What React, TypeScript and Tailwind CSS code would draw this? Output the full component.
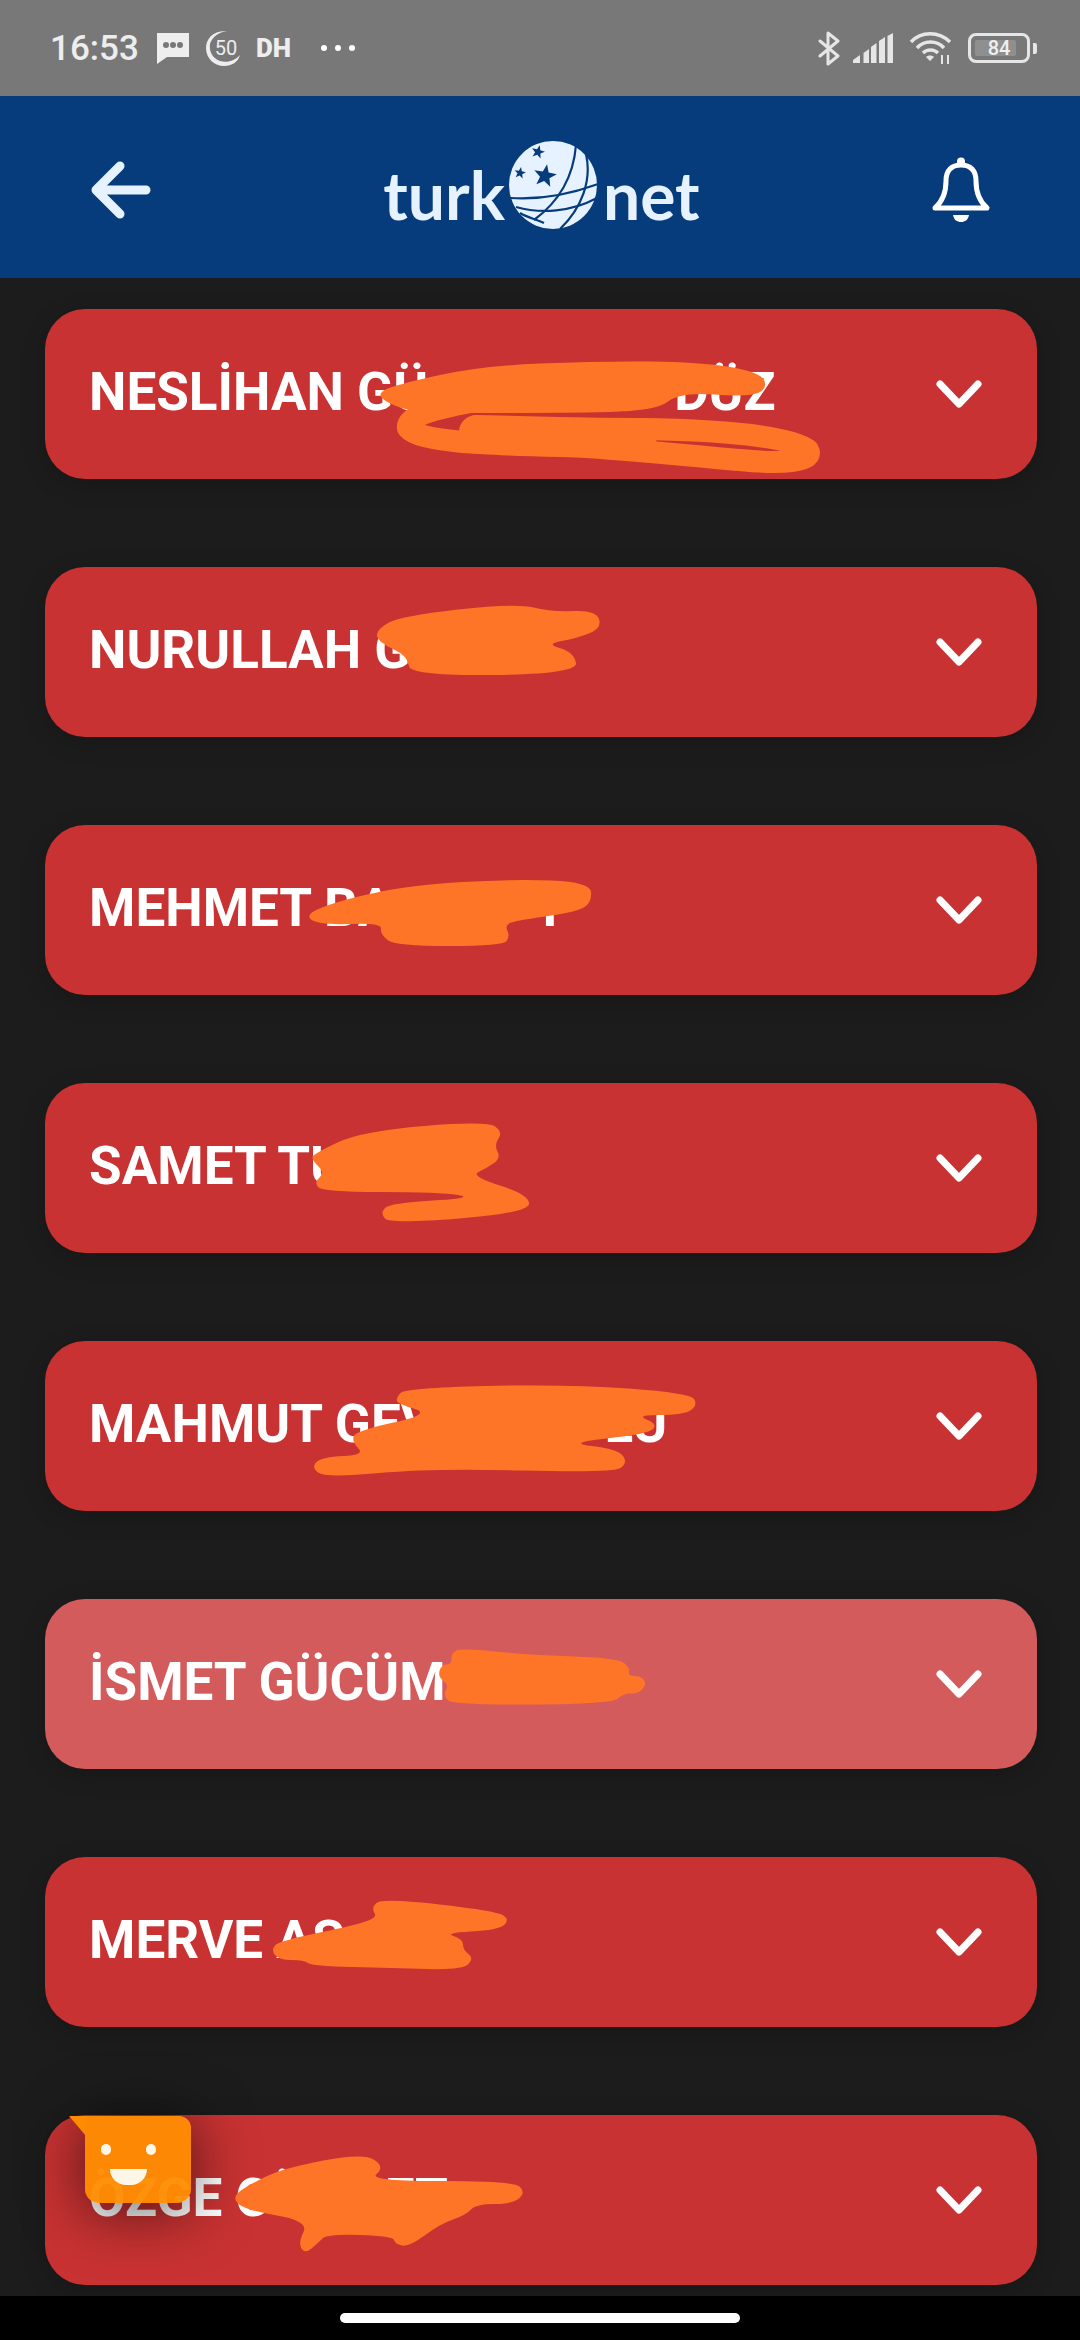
type Pt = [number, number]

// rounds a list of points into a closed blob
function blob(pts: Pt[]) {
  const mid = (a: Pt, b: Pt): Pt => [(a[0] + b[0]) / 2, (a[1] + b[1]) / 2]
  const start = mid(pts[pts.length - 1], pts[0])
  let d = `M${start[0]} ${start[1]}`
  pts.forEach((p, i) => {
    const m = mid(p, pts[(i + 1) % pts.length])
    d += ` Q${p[0]} ${p[1]} ${m[0]} ${m[1]}`
  })
  return d + ' Z'
}

function starPoints(cx: number, cy: number, r: number, rot: number) {
  const out: string[] = []
  for (let i = 0; i < 10; i++) {
    const rad = i % 2 === 0 ? r : r * 0.42
    const a = ((rot + i * 36 - 90) * Math.PI) / 180
    out.push(`${cx + rad * Math.cos(a)},${cy + rad * Math.sin(a)}`)
  }
  return out.join(' ')
}

const cards = [
  {
    name: 'NESLİHAN GÜ',
    tail: 'DÜZ',
    tailClass: 'ml-[246px]',
    top: 309,
    blobs: [
      blob([[378, 393], [395, 385], [480, 366], [600, 361], [700, 362], [760, 372], [768, 388], [750, 397], [680, 392], [656, 411], [560, 413], [415, 413], [385, 402]]),
    ],
    strokes: [
      'M474 428 L640 429 C720 430 790 436 808 450 C815 462 780 464 740 460 C680 455 610 447 560 446 C480 444 420 442 408 428 C406 415 440 408 470 402',
      'M476 432 L640 436',
    ],
  },
  {
    name: 'NURULLAH G',
    top: 567,
    blobs: [
      blob([[376, 630], [400, 616], [516, 603], [551, 612], [596, 610], [602, 628], [578, 638], [545, 644], [574, 652], [578, 674], [410, 676], [408, 656], [378, 642]]),
    ],
    strokes: [],
  },
  {
    name: 'MEHMET BA',
    tail: 'T',
    tailClass: 'ml-[140px]',
    top: 825,
    blobs: [
      blob([[304, 914], [345, 899], [413, 885], [513, 879], [590, 882], [592, 902], [577, 912], [513, 921], [505, 926], [510, 936], [503, 946], [395, 946], [380, 934], [382, 923], [318, 925]]),
    ],
    strokes: [],
  },
  {
    name: 'SAMET TU',
    top: 1083,
    blobs: [
      blob([[313, 1154], [362, 1131], [487, 1121], [503, 1132], [494, 1145], [501, 1158], [487, 1168], [470, 1176], [530, 1195], [528, 1213], [390, 1224], [380, 1213], [390, 1203], [476, 1198], [440, 1192], [322, 1192], [314, 1182], [325, 1173], [312, 1160]]),
    ],
    strokes: [],
  },
  {
    name: 'MAHMUT GEV',
    tail: 'LU',
    tailClass: 'ml-[169px]',
    top: 1341,
    blobs: [
      blob([[396, 1398], [405, 1388], [567, 1384], [690, 1393], [698, 1405], [684, 1415], [635, 1415], [658, 1424], [648, 1434], [565, 1443], [618, 1449], [628, 1463], [613, 1473], [433, 1468], [325, 1478], [311, 1467], [322, 1457], [365, 1455], [352, 1442], [355, 1431], [432, 1414], [398, 1404]]),
    ],
    strokes: [],
  },
  {
    name: 'İSMET GÜCÜM',
    top: 1599,
    pressed: true,
    blobs: [
      blob([[451, 1654], [460, 1648], [530, 1655], [618, 1658], [630, 1668], [628, 1676], [641, 1676], [647, 1684], [638, 1694], [624, 1693], [612, 1704], [452, 1705], [443, 1695], [449, 1685], [438, 1677], [441, 1665], [452, 1664]]),
    ],
    strokes: [],
  },
  {
    name: 'MERVE AS',
    top: 1857,
    blobs: [
      blob([[371, 1908], [382, 1898], [497, 1911], [510, 1920], [498, 1930], [444, 1933], [463, 1939], [463, 1950], [474, 1958], [463, 1970], [393, 1968], [312, 1966], [304, 1960], [279, 1960], [271, 1950], [279, 1941], [347, 1927], [378, 1918]]),
    ],
    strokes: [],
  },
  {
    name: 'ÖZGE CÖ',
    tail: 'ET',
    tailClass: 'ml-[78px]',
    top: 2115,
    blobs: [
      blob([[232, 2198], [245, 2187], [283, 2168], [364, 2153], [385, 2167], [368, 2181], [513, 2181], [526, 2192], [513, 2204], [476, 2204], [466, 2215], [440, 2224], [409, 2247], [395, 2244], [393, 2236], [327, 2234], [318, 2243], [305, 2254], [298, 2243], [309, 2221], [245, 2210]]),
    ],
    strokes: [],
  },
]

function Chevron() {
  return (
    <svg width="52" height="34" viewBox="0 0 52 34" fill="none" className="shrink-0">
      <path d="M8 7 L27 27 L46 7" stroke="white" strokeWidth="7" strokeLinecap="round" strokeLinejoin="round" />
    </svg>
  )
}

function StatusBar() {
  return (
    <div className="h-24 bg-[#787878] flex items-center justify-between pl-[50px] pr-[43px] text-[#ededed] shrink-0">
      <div className="flex items-center">
        <span className="text-[35px] font-medium leading-none font-['Roboto',sans-serif] w-[88px]">16:53</span>
        {/* chat */}
        <svg width="34" height="34" viewBox="0 0 34 34" className="ml-[18px]">
          <path d="M1 2 H33 V26 H11 L1 33 Z" fill="#eeeeee" />
          <circle cx="10" cy="14" r="3" fill="#787878" />
          <circle cx="17" cy="14" r="3" fill="#787878" />
          <circle cx="24" cy="14" r="3" fill="#787878" />
        </svg>
        {/* 50 hilal */}
        <div className="relative w-[36px] h-[36px] ml-[15px] flex items-center justify-center">
          <svg width="36" height="36" viewBox="0 0 36 36" className="absolute inset-0">
            <path d="M22 1 C8 0 1 9 1 18 C1 29 10 36 19 36 C27 36 33 32 35 25 C30 31 22 33 15 31 C7 28 4 21 5 14 C7 7 14 2 22 1 Z" fill="#eeeeee" />
          </svg>
          <span className="text-[20px] leading-none ml-[6px] font-['Roboto',sans-serif]">50</span>
        </div>
        <span className="text-[26px] font-black leading-none ml-[15px] font-['Roboto',sans-serif]">DH</span>
        <div className="flex gap-[8px] ml-[30px]">
          <span className="w-[6px] h-[6px] rounded-full bg-white" />
          <span className="w-[6px] h-[6px] rounded-full bg-white" />
          <span className="w-[6px] h-[6px] rounded-full bg-white" />
        </div>
      </div>
      <div className="flex items-center">
        <svg width="22" height="35" viewBox="0 0 22 35" fill="none" stroke="#e6e6e6" strokeWidth="3" strokeLinejoin="round" strokeLinecap="round">
          <path d="M2 10 L20 25 L10 33 V2 L20 10 L2 25" />
        </svg>
        <svg width="41" height="30" viewBox="0 0 41 30" fill="#e6e6e6" className="ml-[13px]">
          <polygon points="0,30 0,27 7,22 7,30" />
          <polygon points="10.5,30 10.5,20 16,16 16,30" />
          <polygon points="18,30 18,14 23.5,10 23.5,30" />
          <polygon points="26,30 26,8 32,4 32,30" />
          <polygon points="34.5,30 34.5,3 40,0 40,30" />
        </svg>
        <svg width="43" height="34" viewBox="0 0 43 34" fill="none" stroke="#e6e6e6" strokeWidth="3.5" className="ml-[15px]">
          <path d="M2 11 C12 0 30 0 41 11" />
          <path d="M8 17 C15 9 28 9 35 17" />
          <path d="M14 22 C18 18 25 18 29 22" />
          <path d="M17 26 L21 30 L25 26 C23 24 19 24 17 26 Z" fill="#e6e6e6" stroke="none" />
          <path d="M33 33 V24 M39 33 V24" strokeWidth="2" />
        </svg>
        <div className="flex items-center ml-[16px]">
          <div className="relative w-[62px] h-[30px] rounded-[8px] border-[3px] border-[#e6e6e6] flex items-center justify-center">
            <div className="absolute left-[4px] top-[4px] bottom-[4px] w-[41px] rounded-[2px] bg-[#8f8f8f]" />
            <span className="relative text-[20px] font-medium leading-none font-['Roboto',sans-serif] text-[#f0f0f0]">84</span>
          </div>
          <div className="w-[4px] h-[11px] rounded-r-[2px] bg-[#e6e6e6] ml-[3px]" />
        </div>
      </div>
    </div>
  )
}

function Logo() {
  return (
    <div className="flex items-center h-[90px]">
      <span className="text-[66px] font-bold leading-none text-[#e6f2ff] font-['Lato',sans-serif] mt-[16px]">turk</span>
      <svg width="88" height="88" viewBox="133 11 88 88" className="ml-[4px] -mt-[4px]">
        <circle cx="177" cy="55" r="44" fill="#e6f2ff" />
        <g fill="none" stroke="#063c7c" strokeWidth="2.2">
          <path d="M200 15 C198 40 188 68 158 90" />
          <path d="M210 24 C216 50 206 78 184 99" />
          <path d="M222 54 C195 64 165 70 134 68" />
          <path d="M221 68 C195 82 165 84 140 77" />
          <path d="M144 83 C152 88 160 89 168 93" />
        </g>
        <polygon points={starPoints(169, 46, 12, 10)} fill="#063c7c" />
        <polygon points={starPoints(162, 22, 7, 15)} fill="#063c7c" />
        <polygon points={starPoints(144, 43, 6, 10)} fill="#063c7c" />
      </svg>
      <span className="text-[66px] font-bold leading-none text-[#e6f2ff] font-['Lato',sans-serif] mt-[16px] ml-[6px]">net</span>
    </div>
  )
}

function Header() {
  return (
    <div className="h-[182px] bg-[#063c7c] flex items-center justify-between pl-[90px] pr-[89px] shrink-0">
      <svg width="62" height="58" viewBox="0 0 62 58" fill="none" stroke="#e6f2ff" strokeWidth="9" strokeLinecap="round" strokeLinejoin="round" className="mt-[6px]">
        <path d="M6 29 H56 M30 5 L6 29 L30 53" />
      </svg>
      <Logo />
      <svg width="60" height="66" viewBox="0 0 60 66" className="mt-[6px]">
        <circle cx="30" cy="4.5" r="4" fill="white" />
        <path d="M4 51 C12 44 15 34 15 24 C15 13 21 8 30 8 C39 8 45 13 45 24 C45 34 48 44 56 51 Z" fill="none" stroke="white" strokeWidth="5" strokeLinejoin="round" />
        <path d="M22 58 H38 C37 63 34 65 30 65 C26 65 23 63 22 58 Z" fill="white" />
      </svg>
    </div>
  )
}

function Card({ card }: { card: (typeof cards)[number] }) {
  return (
    <div
      className={`relative h-[170px] rounded-[40px] flex items-center justify-between pl-[44px] pr-[53px] shadow-[0_6px_24px_rgba(0,0,0,0.18)] ${
        card.pressed ? 'bg-[#d45b5b]' : 'bg-[#c83232]'
      }`}
    >
      <span className="text-[53px] font-bold leading-none text-white whitespace-nowrap font-['Roboto',sans-serif] -mt-[4px]">
        {card.name}
        {card.tail && <span className={card.tailClass}>{card.tail}</span>}
      </span>
      <Chevron />
      {/* karalama */}
      <svg viewBox={`45 ${card.top} 992 170`} className="absolute inset-0 w-full h-full pointer-events-none">
        {card.blobs.map((d, i) => (
          <path key={i} d={d} fill="#ff7527" />
        ))}
        {card.strokes.map((d, i) => (
          <path key={i} d={d} fill="none" stroke="#ff7527" strokeWidth={i === 0 ? 22 : 34} strokeLinecap="round" strokeLinejoin="round" />
        ))}
      </svg>
    </div>
  )
}

function ChatWidget() {
  return (
    <div className="absolute left-[69px] top-[2116px] w-[122px] h-[87px]">
      <div className="absolute left-[16px] top-0 w-[106px] h-[87px] rounded-tr-[12px] rounded-b-[14px] bg-[#ff8c00]/95 shadow-[0_6px_60px_rgba(0,0,0,0.65)]">
        <div className="absolute left-[16px] top-[28px] w-[10px] h-[11px] rounded-full bg-[#fff6ea]" />
        <div className="absolute left-[61px] top-[28px] w-[10px] h-[11px] rounded-full bg-[#fff6ea]" />
        <div className="absolute left-[25px] top-[53px] w-[37px] h-[16px] rounded-b-[18px] bg-[#fff6ea]" />
      </div>
      <svg width="17" height="20" viewBox="0 0 17 20" className="absolute left-0 top-0">
        <path d="M0 0 H17 V20 Z" fill="#ff8c00" />
      </svg>
    </div>
  )
}

export default function App() {
  return (
    <div className="relative w-[1080px] h-[2340px] bg-[#1c1c1c] flex flex-col overflow-hidden">
      <StatusBar />
      <Header />
      <div className="flex-1 flex flex-col gap-[88px] pt-[31px] pl-[45px] pr-[43px]">
        {cards.map((c) => (
          <Card key={c.top} card={c} />
        ))}
      </div>
      <div className="h-[44px] bg-black flex justify-center pt-[17px] shrink-0">
        <div className="w-[400px] h-[10px] rounded-full bg-white" />
      </div>
      <ChatWidget />
    </div>
  )
}
